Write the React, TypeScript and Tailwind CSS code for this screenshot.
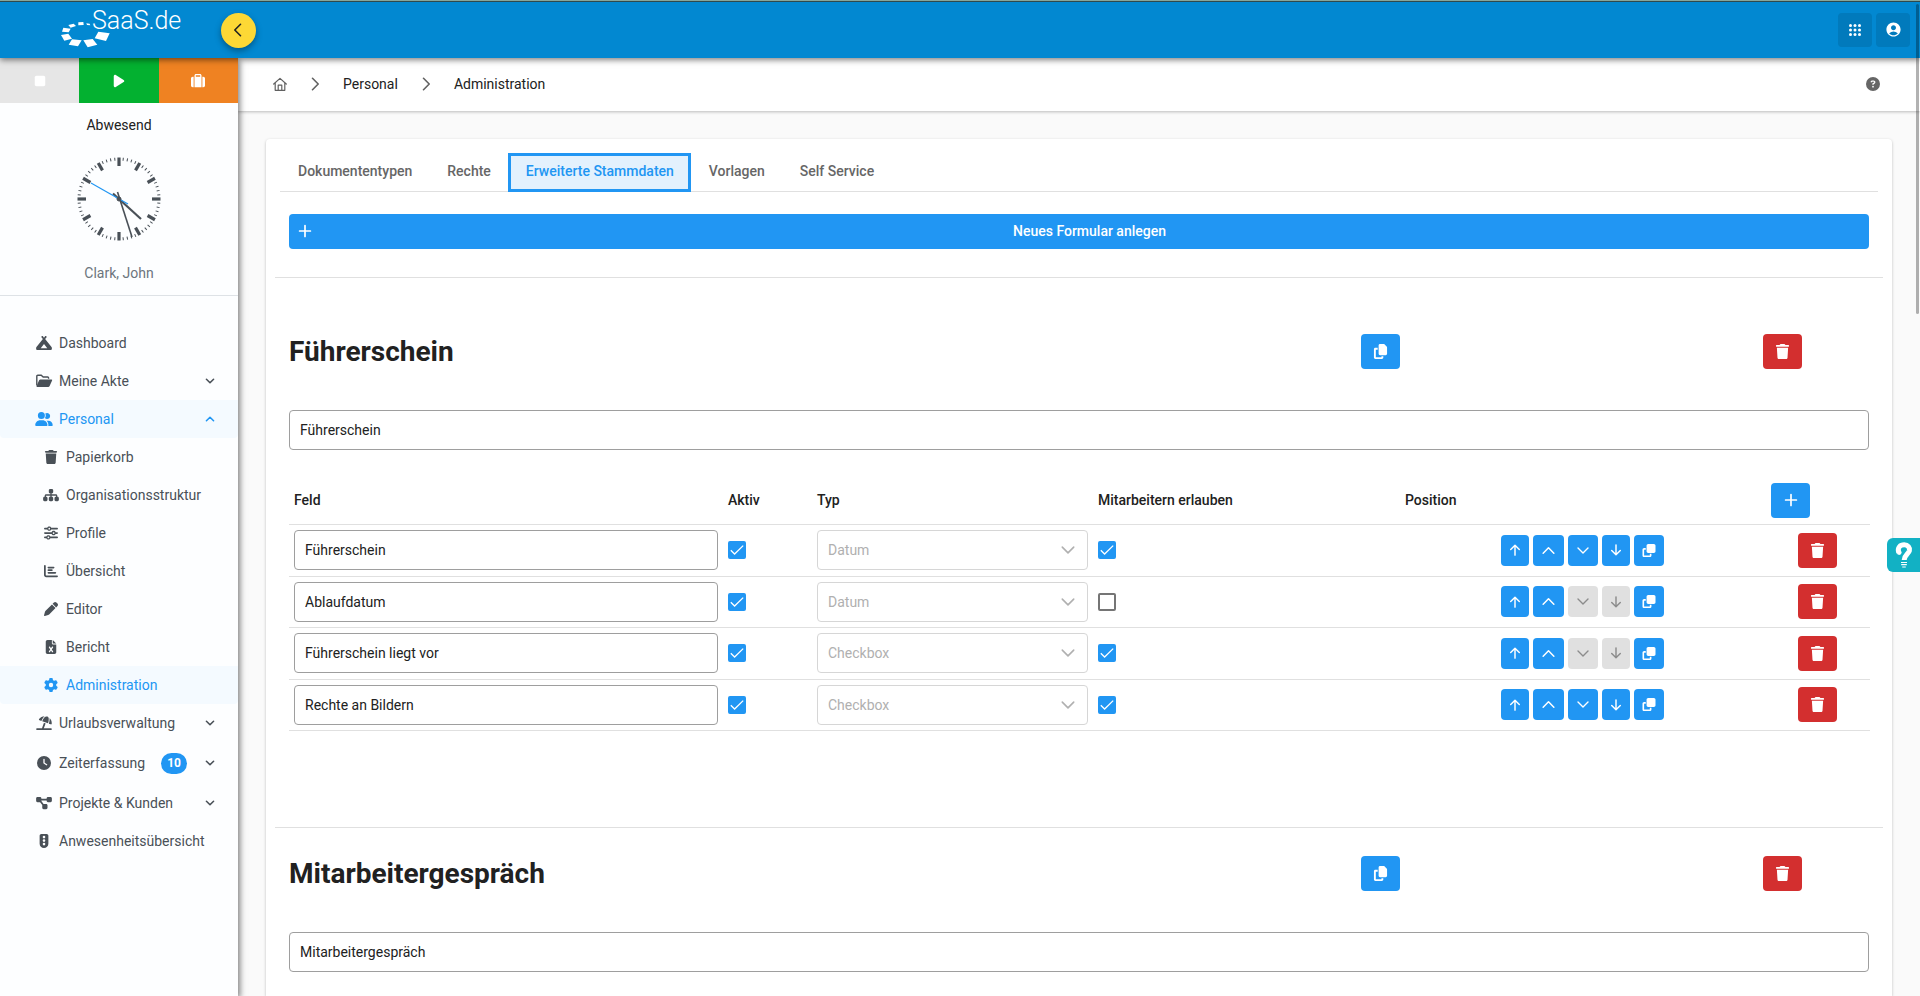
import { useState } from "react";
import type { ReactNode } from "react";
import {
  FaCampground,
  FaChartBar,
  FaCircleQuestion,
  FaClock,
  FaClone,
  FaCopy,
  FaDiagramProject,
  FaFileExcel,
  FaGear,
  FaPen,
  FaPlay,
  FaSitemap,
  FaSliders,
  FaStop,
  FaSuitcase,
  FaTrafficLight,
  FaTrash,
  FaUmbrellaBeach,
  FaUserGroup,
} from "react-icons/fa6";
import { MdAccountCircle } from "react-icons/md";

type IconProps = { className?: string };

function Stroke({ d, className, width = 1.4 }: { d: string; className?: string; width?: number }) {
  return (
    <svg
      viewBox="0 0 14 14"
      className={className}
      fill="none"
      stroke="currentColor"
      strokeWidth={width}
      strokeLinecap="round"
      strokeLinejoin="round"
      aria-hidden="true"
    >
      <path d={d} />
    </svg>
  );
}

const ChevronDown = ({ className, width }: IconProps & { width?: number }) => (
  <Stroke className={className} width={width} d="M2 4.5 L7 9.5 L12 4.5" />
);
const ChevronUp = ({ className, width }: IconProps & { width?: number }) => (
  <Stroke className={className} width={width} d="M2 9.5 L7 4.5 L12 9.5" />
);
const ChevronRight = ({ className }: IconProps) => (
  <Stroke className={className} d="M4.8 2 L9.8 7 L4.8 12" />
);
const ArrowUp = ({ className }: IconProps) => (
  <Stroke className={className} width={1.7} d="M7 13 V1.8 M2 6.4 L7 1.4 L12 6.4" />
);
const ArrowDown = ({ className }: IconProps) => (
  <Stroke className={className} width={1.7} d="M7 1 V12.2 M2 7.6 L7 12.6 L12 7.6" />
);
const Plus = ({ className }: IconProps) => (
  <Stroke className={className} width={1.7} d="M7 1.6 V12.4 M1.6 7 H12.4" />
);

function FolderOpen({ className }: IconProps) {
  return (
    <svg viewBox="0 0 18 14" className={className} aria-hidden="true">
      <path
        d="M1.8 11.5 V2.2 Q1.8 1.2 2.8 1.2 H6.2 L8.2 3 H12.6 Q13.6 3 13.6 4 V4.8"
        fill="none"
        stroke="currentColor"
        strokeWidth="1.4"
      />
      <path d="M5.4 5.4 H16.4 Q17.6 5.4 17.1 6.5 L14.6 12 Q14.2 13 13.1 13 H2.2 Q1.2 13 1.6 12 L4.1 6.3 Q4.5 5.4 5.4 5.4 Z" fill="currentColor" />
    </svg>
  );
}

function Logo() {
  return (
    <div className="relative h-14 w-[127px] text-white">
      <svg viewBox="30 0 150 150" className="absolute left-0 -top-0.5 size-[50px]" fill="currentColor" aria-hidden="true">
        <path d="M109 70 L119 71 L121 76 L111 75 Z" />
        <path d="M85 67 L100 66 L101 75 L85 76 Z" />
        <path d="M55 75 L71 71 L78 78 L62 83 Z" />
        <path d="M40 83 L62 86 L56 97 L36 95 Z" />
        <path d="M33 105 L55 101 L66 116 L43 122 Z" />
        <path d="M66 118 L95 121 L84 139 L56 134 Z" />
        <path d="M100 121 L128 117 L142 134 L113 142 Z" />
        <path d="M145 95 L179 100 L168 123 L134 115 Z" />
      </svg>
      <span className="absolute left-8 top-[3px] text-[25px] font-light leading-8">SaaS.de</span>
    </div>
  );
}

function Clock() {
  return (
    <svg viewBox="-42 -42 84 84" className="size-[84px] text-[#495057]" stroke="currentColor" aria-label="Uhr">
      {Array.from({ length: 60 }, (_, i) => {
        const hour = i % 5 === 0;
        return (
          <line
            key={i}
            x1="0"
            x2="0"
            y1="-41.5"
            y2={hour ? -33 : -38.5}
            strokeWidth={hour ? 3.2 : 1}
            transform={`rotate(${i * 6})`}
          />
        );
      })}
      <line x1="-6" y1="-5.5" x2="22" y2="20" strokeWidth="2.2" />
      <line x1="-1.5" y1="-7" x2="13" y2="38" strokeWidth="1.6" />
      <line x1="-28" y1="-16" x2="9" y2="5" strokeWidth="1.2" stroke="#2196f3" />
      <circle r="2" fill="currentColor" />
    </svg>
  );
}

type NavItem = {
  label: string;
  icon: ReactNode;
  sub?: boolean;
  active?: boolean;
  chevron?: "up" | "down";
  badge?: string;
  tall?: boolean;
};

const iconClass = "h-3.5 w-[18px]";

const navItems: NavItem[] = [
  { label: "Dashboard", icon: <FaCampground className={iconClass} /> },
  { label: "Meine Akte", icon: <FolderOpen className={iconClass} />, chevron: "down" },
  { label: "Personal", icon: <FaUserGroup className={iconClass} />, chevron: "up", active: true },
  { label: "Papierkorb", icon: <FaTrash className={iconClass} />, sub: true },
  { label: "Organisationsstruktur", icon: <FaSitemap className={iconClass} />, sub: true },
  { label: "Profile", icon: <FaSliders className={iconClass} />, sub: true },
  { label: "Übersicht", icon: <FaChartBar className={iconClass} />, sub: true },
  { label: "Editor", icon: <FaPen className={iconClass} />, sub: true },
  { label: "Bericht", icon: <FaFileExcel className={iconClass} />, sub: true },
  { label: "Administration", icon: <FaGear className={iconClass} />, sub: true, active: true },
  { label: "Urlaubsverwaltung", icon: <FaUmbrellaBeach className={iconClass} />, chevron: "down" },
  { label: "Zeiterfassung", icon: <FaClock className={iconClass} />, chevron: "down", badge: "10", tall: true },
  { label: "Projekte & Kunden", icon: <FaDiagramProject className={iconClass} />, chevron: "down" },
  { label: "Anwesenheitsübersicht", icon: <FaTrafficLight className={iconClass} /> },
];

function Sidebar() {
  return (
    <aside className="relative z-20 w-[238px] shrink-0 bg-[#fdfeff] shadow-[2px_2px_6px_rgba(0,0,0,0.5)]">
      <div className="grid h-[45px] grid-cols-3 text-white">
        <button aria-label="Stopp" className="flex items-center justify-center bg-[#e6e6e6]">
          <FaStop className="size-3.5" />
        </button>
        <button aria-label="Start" className="flex items-center justify-center bg-[#03b130]">
          <FaPlay className="size-3.5" />
        </button>
        <button aria-label="Abwesenheit" className="flex items-center justify-center bg-[#ef8222]">
          <FaSuitcase className="size-3.5" />
        </button>
      </div>
      <div className="flex flex-col items-center border-b border-[#dee2e6] pb-3">
        <p className="mt-3 leading-5 text-[#212121]">Abwesend</p>
        <div className="my-[22px]">
          <Clock />
        </div>
        <p className="leading-5 text-[#6c757d]">Clark, John</p>
      </div>
      <nav className="pt-7">
        {navItems.map((item) => (
          <a
            key={item.label}
            href="#"
            className={`flex items-center gap-1.5 pr-[23px] ${item.tall ? "h-[42px]" : "h-[38px]"} ${
              item.sub ? "pl-[42px]" : "pl-[35px]"
            } ${item.active ? "rounded-b bg-[#f4faff] text-[#2196f3]" : "text-[#495057]"}`}
          >
            <span className="flex w-[18px] justify-center">{item.icon}</span>
            <span>{item.label}</span>
            <span className="ml-auto flex items-center gap-[18px]">
              {item.badge && (
                <span className="rounded-full bg-[#2196f3] px-1.5 text-xs font-bold leading-[21px] text-white">
                  {item.badge}
                </span>
              )}
              {item.chevron === "down" && <ChevronDown className="size-2.5" width={2.2} />}
              {item.chevron === "up" && <ChevronUp className="size-2.5" width={2.2} />}
            </span>
          </a>
        ))}
      </nav>
    </aside>
  );
}

function IconButton({
  label,
  color = "blue",
  children,
}: {
  label: string;
  color?: "blue" | "red";
  children: ReactNode;
}) {
  return (
    <button
      aria-label={label}
      className={`inline-flex h-[35px] w-[39px] items-center justify-center rounded align-middle text-white ${
        color === "red" ? "bg-[#d32f2f]" : "bg-[#2196f3]"
      }`}
    >
      {children}
    </button>
  );
}

function MoveButton({ label, disabled, children }: { label: string; disabled?: boolean; children: ReactNode }) {
  return (
    <button
      aria-label={label}
      disabled={disabled}
      className="flex h-[31px] items-center rounded bg-[#2196f3] px-2 text-white disabled:bg-[#e0e0e0] disabled:text-[#8c8c8c]"
    >
      {children}
    </button>
  );
}

function Checkbox({ label, defaultChecked }: { label: string; defaultChecked: boolean }) {
  return (
    <label className="relative block size-[18px]">
      <input
        type="checkbox"
        aria-label={label}
        defaultChecked={defaultChecked}
        className="peer block size-[18px] appearance-none rounded-xs border-2 border-[#757575] bg-white checked:border-[#2196f3] checked:bg-[#2196f3]"
      />
      <svg
        viewBox="0 0 18 18"
        className="pointer-events-none absolute inset-0 hidden size-[18px] text-white peer-checked:block"
        fill="none"
        stroke="currentColor"
        strokeWidth="1.3"
        aria-hidden="true"
      >
        <path d="M2.8 9.3 L6.6 13 L15.2 4.6" />
      </svg>
    </label>
  );
}

type Field = { name: string; type: string; allowed: boolean; last?: boolean };

const fields: Field[] = [
  { name: "Führerschein", type: "Datum", allowed: true },
  { name: "Ablaufdatum", type: "Datum", allowed: false, last: true },
  { name: "Führerschein liegt vor", type: "Checkbox", allowed: true, last: true },
  { name: "Rechte an Bildern", type: "Checkbox", allowed: true },
];

function FieldTable() {
  return (
    <table className="mt-[27px] w-full table-fixed text-left">
      <colgroup>
        <col className="w-[434px]" />
        <col className="w-[89px]" />
        <col className="w-[281px]" />
        <col className="w-[307px]" />
        <col className="w-[311px]" />
        <col className="w-[159px]" />
      </colgroup>
      <thead>
        <tr className="h-[47px] border-b border-[#e0e0e0]">
          <th className="px-[5px] font-medium">Feld</th>
          <th className="px-[5px] font-medium">Aktiv</th>
          <th className="px-[5px] font-medium">Typ</th>
          <th className="px-[5px] font-medium">Mitarbeitern erlauben</th>
          <th className="px-[5px] font-medium">Position</th>
          <th className="text-center font-medium">
            <IconButton label="Feld hinzufügen">
              <Plus className="size-3.5" />
            </IconButton>
          </th>
        </tr>
      </thead>
      <tbody>
        {fields.map((field) => (
          <tr key={field.name} className="border-b border-[#e0e0e0] odd:h-[52px] even:h-[51px]">
            <td className="px-[5px]">
              <input
                type="text"
                aria-label="Feld"
                defaultValue={field.name}
                className="block h-10 w-full rounded border border-[#9e9e9e] bg-white px-2.5"
              />
            </td>
            <td className="px-[5px]">
              <Checkbox label="Aktiv" defaultChecked />
            </td>
            <td className="px-[5px]">
              <div className="relative text-[#b0b0b0]">
                <select
                  aria-label="Typ"
                  disabled
                  defaultValue={field.type}
                  className="block h-10 w-full appearance-none rounded border border-[#d6d6d6] bg-white px-2.5 opacity-100"
                >
                  <option>Datum</option>
                  <option>Checkbox</option>
                </select>
                <ChevronDown className="pointer-events-none absolute right-3 top-3 size-4" />
              </div>
            </td>
            <td className="px-[5px]">
              <Checkbox label="Mitarbeitern erlauben" defaultChecked={field.allowed} />
            </td>
            <td className="pr-[47px]">
              <div className="flex justify-end gap-1">
                <MoveButton label="Ganz nach oben">
                  <ArrowUp className="size-3" />
                </MoveButton>
                <MoveButton label="Nach oben">
                  <ChevronUp className="size-[15px]" />
                </MoveButton>
                <MoveButton label="Nach unten" disabled={field.last}>
                  <ChevronDown className="h-[15px] w-3.5" />
                </MoveButton>
                <MoveButton label="Ganz nach unten" disabled={field.last}>
                  <ArrowDown className="size-3" />
                </MoveButton>
                <MoveButton label="Duplizieren">
                  <FaClone className="h-[13px] w-3.5" />
                </MoveButton>
              </div>
            </td>
            <td className="pr-[33px] text-right">
              <IconButton label="Feld löschen" color="red">
                <FaTrash className="size-[15px]" />
              </IconButton>
            </td>
          </tr>
        ))}
      </tbody>
    </table>
  );
}

function FormSection({ title, children }: { title: string; children?: ReactNode }) {
  return (
    <section className="border-t border-[#e0e0e0] pt-7 first:pt-14">
      <div className="grid grid-cols-12 items-center">
        <h2 className="col-span-8 px-3.5 text-[28px] font-bold leading-[35px]">{title}</h2>
        <div className="col-span-3 px-3.5">
          <IconButton label="Formular kopieren">
            <FaCopy className="size-[15px]" />
          </IconButton>
        </div>
        <div className="px-3.5">
          <IconButton label="Formular löschen" color="red">
            <FaTrash className="size-[15px]" />
          </IconButton>
        </div>
      </div>
      <div className="mt-[41px] px-3.5">
        <input
          type="text"
          aria-label="Formularname"
          defaultValue={title}
          className="block h-10 w-full rounded border border-[#9e9e9e] bg-white px-2.5"
        />
        {children}
      </div>
    </section>
  );
}

const tabs = ["Dokumententypen", "Rechte", "Erweiterte Stammdaten", "Vorlagen", "Self Service"];

export default function App() {
  const [activeTab, setActiveTab] = useState("Erweiterte Stammdaten");

  return (
    <div className="relative flex min-h-screen flex-col bg-[#fafafa] font-[Roboto,sans-serif] text-sm text-[#212121]">
      <header className="relative z-30 flex h-[58px] items-center border-t border-[#86a59b] bg-[#0288d1] pl-[60px] pr-2.5 shadow-[0_2px_6px_rgba(0,0,0,0.5)]">
        <div className="absolute inset-x-0 top-0 h-px bg-[#2f4a4c]" />
        <Logo />
        <button
          aria-label="Menü einklappen"
          className="ml-[34px] mt-0.5 flex size-[35px] items-center justify-center rounded-full bg-[#fdd835] pb-0.5 pr-0.5 shadow-[0_3px_6px_rgba(0,0,0,0.35)]"
        >
          <ChevronRight className="size-4 rotate-180" />
        </button>
        <div className="ml-auto flex gap-1 text-white">
          <button aria-label="Anwendungen" className="flex size-[34px] items-center justify-center rounded bg-[#017abc]">
            <svg viewBox="0 0 12 12" className="size-3" fill="currentColor" aria-hidden="true">
              {[1.5, 6, 10.5].map((y) => [1.5, 6, 10.5].map((x) => <circle key={`${x}-${y}`} cx={x} cy={y} r="1.5" />))}
            </svg>
          </button>
          <button aria-label="Konto" className="flex size-[34px] items-center justify-center rounded bg-[#017abc]">
            <MdAccountCircle className="size-[17px]" />
          </button>
        </div>
      </header>

      <div className="flex flex-1">
        <Sidebar />
        <div className="flex min-w-0 flex-1 flex-col">
          <div className="relative z-10 flex h-[53px] items-center gap-6 bg-white pb-0.5 pl-[35px] pr-10 shadow-[0_1px_3px_rgba(0,0,0,0.25)]">
            <a href="#" aria-label="Startseite" className="text-[#616161]">
              <svg viewBox="0 0 14 14" className="size-3.5" fill="none" stroke="currentColor" strokeWidth="1.2" strokeLinejoin="round" strokeLinecap="round" aria-hidden="true">
                <path d="M0.7 7 L7 1.4 L13.3 7 M2.2 5.8 V13.3 H11.8 V5.8 M5.2 13.2 V8.2 H8.8 V13.2" />
              </svg>
            </a>
            <ChevronRight className="-mx-1 size-4 text-[#616161]" />
            <a href="#">Personal</a>
            <ChevronRight className="-mx-1 size-4 text-[#616161]" />
            <a href="#">Administration</a>
            <button aria-label="Hilfe" className="ml-auto text-[#666666]">
              <FaCircleQuestion className="size-3.5" />
            </button>
          </div>

          <main className="mx-7 mt-7 flex-1 rounded-t bg-white px-[9px] pt-3.5 shadow-[0_1px_3px_rgba(0,0,0,0.25)]">
            <div className="mx-[5px] flex h-[39px] border-b border-[#e0e0e0]" role="tablist">
              {tabs.map((tab) => (
                <button
                  key={tab}
                  role="tab"
                  aria-selected={tab === activeTab}
                  onClick={() => setActiveTab(tab)}
                  className={`-mb-px pb-1 pl-[18px] pr-[17px] font-medium ${
                    tab === activeTab
                      ? "bg-[#e3f1fd] text-[#2196f3] shadow-[inset_0_0_0_3px_#2196f3]"
                      : "text-[#666666]"
                  }`}
                >
                  {tab}
                </button>
              ))}
            </div>
            <div className="mt-[22px] px-3.5 pb-7">
              <button className="flex h-[35px] w-full items-center gap-2 rounded bg-[#2196f3] pb-0.5 pl-[9px] pr-2.5 font-medium text-white">
                <Plus className="size-3.5" />
                <span className="flex-1 text-center">Neues Formular anlegen</span>
              </button>
            </div>
            <div className="flex flex-col gap-24">
              <FormSection title="Führerschein">
                <FieldTable />
              </FormSection>
              <FormSection title="Mitarbeitergespräch" />
            </div>
          </main>
        </div>
      </div>

      <div className="absolute right-px top-1 z-40 h-[310px] w-[3px] rounded-full bg-black/30" />
      <button
        aria-label="Support"
        className="fixed right-0 top-[538px] z-40 flex h-[34px] w-[33px] items-center justify-center rounded-l-md bg-[#12b1c4] text-white"
      >
        <svg viewBox="0 0 20 28" className="h-7 w-5" fill="none" stroke="currentColor" aria-hidden="true">
          <path d="M4.8 11.6 C3 6.4 6.4 3.8 10.2 3.8 C14 3.8 16 6.6 15.4 9.6 C14.6 13 10.4 13.6 10.2 19" strokeWidth="5" />
          <circle cx="5.2" cy="11.6" r="2.4" fill="currentColor" stroke="none" />
          <path d="M7 21.5 H13 M7.2 23.7 H12.8 M8.2 26 H11.8" strokeWidth="1.2" />
        </svg>
      </button>
    </div>
  );
}
